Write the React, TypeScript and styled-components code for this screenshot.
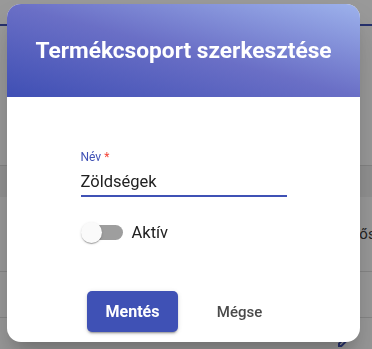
import styled, { createGlobalStyle } from 'styled-components';

const GlobalStyle = createGlobalStyle`
  html, body {
    margin: 0;
    padding: 0;
    background: #ffffff;
    font-family: Roboto, "Noto Sans", Arial, sans-serif;
  }
  * {
    box-sizing: border-box;
  }
`;

export default function App() {
  return (
    <>
      <GlobalStyle />
      <Page>
        <TopBar />
        <Table>
          <HeaderRow />
          <Row $height={75}>
            <span />
            <Cell $width={44}>Felelős</Cell>
          </Row>
          <Row $height={46}>
            <span />
          </Row>
          <Row $height={40}>
            <span />
            <Cell $width={37}>
              <EditIcon />
            </Cell>
          </Row>
        </Table>
      </Page>
      <Backdrop>
        <Dialog>
          <DialogHeader>
            <Title>Termékcsoport szerkesztése</Title>
          </DialogHeader>
          <DialogBody>
            <Field>
              <Label>
                Név <Required>*</Required>
              </Label>
              <Input defaultValue="Zöldségek" />
            </Field>
            <SwitchRow>
              <Switch>
                <Track />
                <Thumb />
              </Switch>
              <SwitchLabel>Aktív</SwitchLabel>
            </SwitchRow>
          </DialogBody>
          <Actions>
            <Button $primary>Mentés</Button>
            <Button>Mégse</Button>
          </Actions>
        </Dialog>
      </Backdrop>
    </>
  );
}

function EditIcon() {
  return (
    <svg width="24" height="24" viewBox="0 0 24 24" fill="#3f51b5">
      <path d="M3 17.25V21h3.75L17.81 9.94l-3.75-3.75L3 17.25zM5.92 19H5v-.92l9.06-9.06.92.92L5.92 19zM20.71 5.63l-2.34-2.34c-.2-.2-.45-.29-.71-.29s-.51.1-.7.29l-1.83 1.83 3.75 3.75 1.83-1.83c.39-.39.39-1.02 0-1.41z" />
    </svg>
  );
}

const Page = styled.div`
  min-height: 100vh;
  background: #ffffff;
`;

const TopBar = styled.header`
  height: 26px;
  border-bottom: 2px solid #3f51b5;
`;

const Table = styled.div`
  margin-top: 139px;
  border-top: 1px solid #dcdcdc;
`;

const HeaderRow = styled.div`
  height: 31px;
  background: #f2f2f2;
`;

const Row = styled.div<{ $height: number }>`
  height: ${(p) => p.$height}px;
  display: grid;
  grid-template-columns: 1fr auto;
  align-items: center;
  border-bottom: 1px solid #e0e0e0;
`;

const Cell = styled.div<{ $width: number }>`
  width: ${(p) => p.$width}px;
  white-space: nowrap;
  font-size: 15px;
  color: #3a3a3a;
  display: flex;
  align-items: center;
  align-self: stretch;
`;

const Backdrop = styled.div`
  position: fixed;
  inset: 0;
  background: rgba(0, 0, 0, 0.4);
  display: flex;
  align-items: flex-start;
  justify-content: flex-start;
  padding: 4px 0 0 7px;
`;

const Dialog = styled.div`
  width: 353px;
  height: 338px;
  background: #ffffff;
  border-radius: 14px;
  overflow: hidden;
  box-shadow: 0 11px 15px -7px rgba(0, 0, 0, 0.2), 0 24px 38px 3px rgba(0, 0, 0, 0.14);
  display: flex;
  flex-direction: column;
`;

const DialogHeader = styled.div`
  height: 93px;
  display: flex;
  align-items: center;
  justify-content: center;
  background: linear-gradient(to top right, #3f4fb4 0%, #6a6fc6 50%, #9db2ec 100%);
`;

const Title = styled.h2`
  margin: 0;
  color: #ffffff;
  font-size: 22.7px;
  font-weight: 700;
`;

const DialogBody = styled.div`
  padding-top: 53px;
  display: flex;
  flex-direction: column;
  align-items: center;
`;

const Field = styled.div`
  width: 206px;
  display: flex;
  flex-direction: column;
`;

const Label = styled.label`
  font-size: 12px;
  line-height: 14px;
  color: #3f51b5;
  margin-bottom: 8px;
`;

const Required = styled.span`
  color: #f44336;
`;

const Input = styled.input`
  border: none;
  border-bottom: 2px solid #3f51b5;
  outline: none;
  padding: 0 0 4px;
  margin: 0;
  font-family: Roboto, sans-serif;
  font-size: 16.5px;
  line-height: 19px;
  height: 25px;
  color: #212121;
  background: transparent;
`;

const SwitchRow = styled.div`
  width: 206px;
  height: 38px;
  margin-top: 16px;
  display: flex;
  align-items: center;
  gap: 9px;
`;

const Switch = styled.div`
  position: relative;
  width: 42px;
  height: 21px;
  display: flex;
  align-items: center;
  justify-content: flex-end;
`;

const Track = styled.div`
  width: 36px;
  height: 15px;
  border-radius: 8px;
  background: #9e9e9e;
`;

const Thumb = styled.div`
  position: absolute;
  left: 0;
  top: 0;
  width: 21px;
  height: 21px;
  border-radius: 50%;
  background: #fafafa;
  box-shadow: 0 2px 1px -1px rgba(0, 0, 0, 0.2), 0 1px 1px 0 rgba(0, 0, 0, 0.14), 0 1px 3px 0 rgba(0, 0, 0, 0.12);
`;

const SwitchLabel = styled.span`
  font-size: 16.5px;
  color: #212121;
`;

const Actions = styled.div`
  margin-top: 40px;
  display: flex;
  justify-content: center;
  gap: 16px;
  padding-left: 5px;
`;

const Button = styled.button<{ $primary?: boolean }>`
  width: 91px;
  height: 41px;
  border: none;
  border-radius: 5px;
  font-family: Roboto, sans-serif;
  font-size: ${(p) => (p.$primary ? 16 : 15)}px;
  font-weight: ${(p) => (p.$primary ? 700 : 500)};
  color: ${(p) => (p.$primary ? '#ffffff' : '#4a4a4a')};
  background: ${(p) => (p.$primary ? '#3f51b5' : 'transparent')};
  box-shadow: ${(p) =>
    p.$primary
      ? '0 3px 1px -2px rgba(0,0,0,0.2), 0 2px 2px 0 rgba(0,0,0,0.14), 0 1px 5px 0 rgba(0,0,0,0.12)'
      : 'none'};
`;
